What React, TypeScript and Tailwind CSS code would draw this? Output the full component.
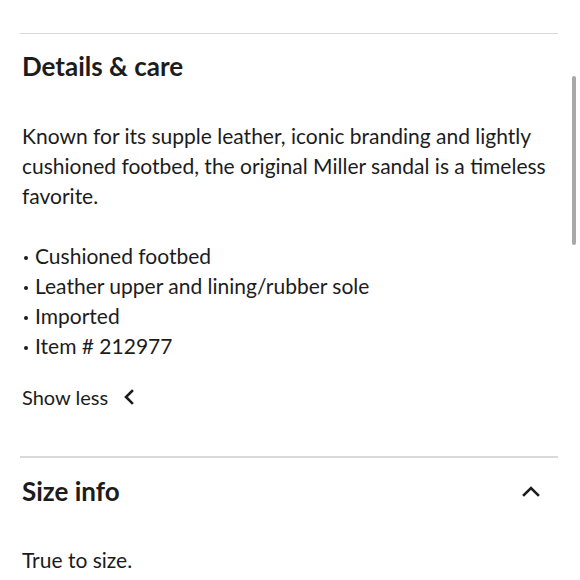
export default function App() {
  return (
    <div className="relative w-[580px] h-[580px] overflow-hidden bg-white text-[#1c1c1c]" style={{ fontFamily: "Lato, 'Noto Sans', sans-serif" }}>
      <div className="pt-[33px] pl-[22px] pr-[22px]">
        <div className="h-px bg-[#d9d9d9] -ml-[2px]" />
        <div className="pt-[16px] h-[87px]">
          <h2 className="text-[26px] leading-[32px] font-bold">Details &amp; care</h2>
        </div>
        <p className="text-[21px] leading-[30px]">
          Known for its supple leather, iconic branding and lightly cushioned footbed, the original Miller sandal is a timeless favorite.
        </p>
        <ul className="mt-[30px] text-[21px] leading-[30px]">
          {["Cushioned footbed", "Leather upper and lining/rubber sole", "Imported", "Item # 212977"].map((t) => (
            <li key={t} className="flex items-center">
              <span className="w-[4px] h-[4px] rounded-full bg-[#1c1c1c] ml-[2px] mr-[7px] mt-[3px]" />
              <span>{t}</span>
            </li>
          ))}
        </ul>
        <div className="mt-[21px] flex items-center text-[20px] leading-[30px]">
          <span>Show less</span>
          <svg className="ml-[15px]" width="12" height="16" viewBox="0 0 12 16" fill="none">
            <path d="M9 2 L3 8 L9 14" stroke="#1c1c1c" strokeWidth="2.6" strokeLinecap="square" />
          </svg>
        </div>
        <div className="mt-[44px] h-[2px] bg-[#d9d9d9] -ml-[2px]" />
        <div className="pt-[17px] flex items-center justify-between pr-[18px]">
          <h2 className="text-[26px] leading-[32px] font-bold">Size info</h2>
          <svg width="18" height="12" viewBox="0 0 18 12" fill="none">
            <path d="M2 10 L9 3 L16 10" stroke="#1c1c1c" strokeWidth="2.6" strokeLinecap="square" />
          </svg>
        </div>
        <p className="mt-[38px] text-[21px] leading-[30px]">True to size.</p>
      </div>
      <div className="absolute left-[572px] top-[76px] w-[4px] h-[169px] rounded-full bg-[#a8a8a8]" />
    </div>
  );
}
